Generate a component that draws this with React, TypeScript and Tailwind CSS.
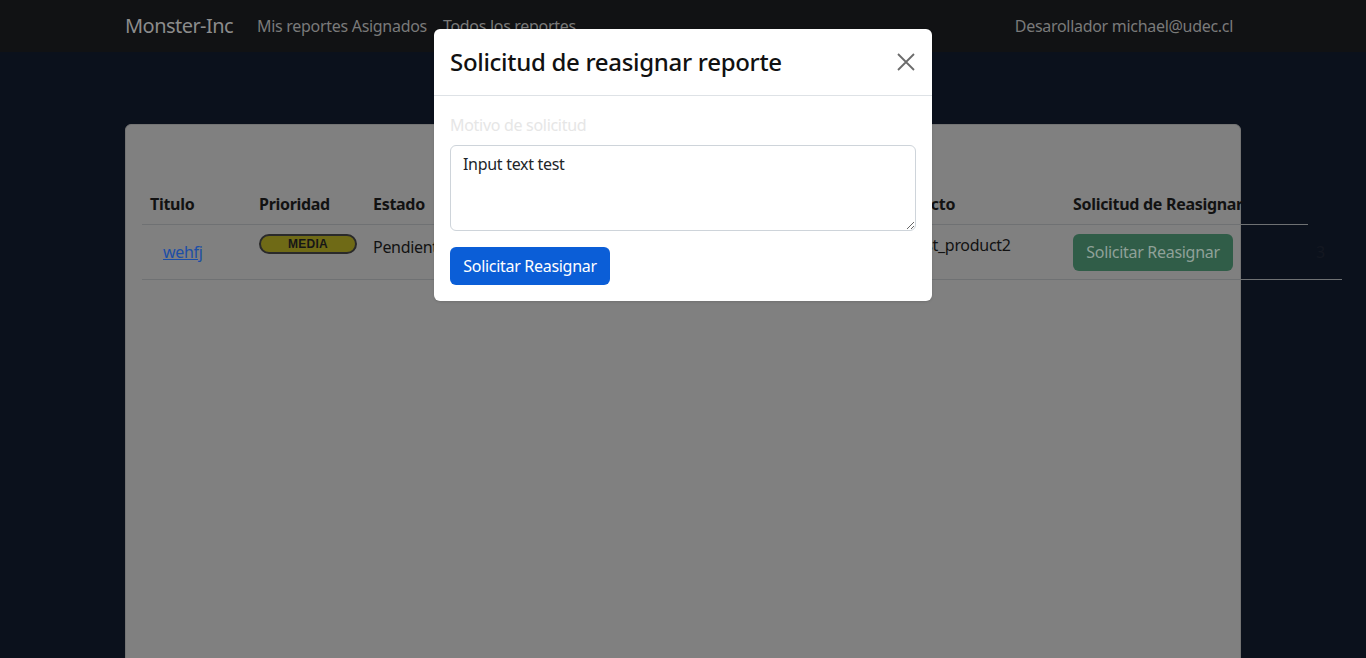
import React from "react";

const font = { fontFamily: '"Noto Sans", "Open Sans", sans-serif' };

export default function App() {
  return (
    <div className="relative h-[658px] w-[1366px] overflow-hidden bg-[#0b111c] tracking-[-0.3px]" style={font}>
      {/* navbar */}
      <nav className="h-[52px] bg-[#111214]">
        <div className="mx-auto flex h-full w-[1116px] items-center">
          <span className="text-[20px] tracking-[-0.55px] text-[#8c8c8c]">Monster-Inc</span>
          <span className="ml-[24px] text-[16px] text-[#7a7a7a]">Mis reportes Asignados</span>
          <span className="ml-[16px] text-[16px] text-[#7a7a7a]">Todos los reportes</span>
          <span className="ml-auto mr-[8px] text-[16px] text-[#7a7a7a]">Desarollador michael@udec.cl</span>
        </div>
      </nav>

      {/* card */}
      <div className="mx-auto mt-[72px] h-[600px] w-[1116px] rounded-[6px] border border-[#737373] bg-[#808080] pt-[58px] pl-[16px]">
        <div className="w-[1200px]">
          <div className="flex h-[42px] w-[1166px] items-center border-b border-[#6f7173] text-[16px] font-bold text-[#121212]">
            <div className="w-[109px] px-[8px]">Titulo</div>
            <div className="w-[114px] px-[8px]">Prioridad</div>
            <div className="w-[120px] px-[8px]">Estado</div>
            <div className="w-[200px] px-[8px]">Fecha</div>
            <div className="w-[192px] px-[8px]">Descripcion</div>
            <div className="w-[188px] px-[8px]">Producto</div>
            <div className="w-[243px] whitespace-nowrap px-[8px]">Solicitud de Reasignar</div>
          </div>
          <div className="flex h-[55px] w-[1200px] items-center border-b border-[#6f7173] text-[16px] text-[#121212]">
            <div className="w-[109px] px-[8px]">
              <span className="ml-[13px] text-[#1c4ea6] underline">wehfj</span>
            </div>
            <div className="w-[114px] self-start px-[8px] pt-[9px]">
              <div className="flex h-[20px] w-[98px] items-center justify-center rounded-full border-2 border-[#2a2a2a] bg-[#6f6a16] text-[12px] font-bold tracking-wide text-[#161616]" style={{ fontFamily: '"Liberation Sans", sans-serif' }}>
                MEDIA
              </div>
            </div>
            <div className="-mt-[10px] w-[120px] px-[8px]">Pendiente</div>
            <div className="w-[200px] px-[8px]">2023-05-10</div>
            <div className="w-[192px] px-[8px]">desc</div>
            <div className="-mt-[14px] w-[188px] px-[8px]">
              <span className="ml-[26px]">test_product2</span>
            </div>
            <div className="w-[243px] px-[8px]">
              <div className="flex h-[37px] w-[160px] items-center justify-center rounded-[6px] bg-[#305d48] text-[16px] text-[#8fa198]">
                Solicitar Reasignar
              </div>
            </div>
            <div className="px-[8px] text-[#141821]">3</div>
          </div>
        </div>
      </div>

      {/* modal */}
      <div className="absolute left-[434px] top-[29px] w-[498px] rounded-[6px] bg-white shadow">
        <div className="flex h-[67px] items-center justify-between border-b border-[#dee2e6] px-[16px]">
          <h5 className="text-[24px] font-medium text-[#111]">Solicitud de reasignar reporte</h5>
          <svg width="20" height="20" viewBox="0 0 20 20">
            <path d="M2 2 L18 18 M18 2 L2 18" stroke="#6b6b6b" strokeWidth="1.8" />
          </svg>
        </div>
        <div className="px-[16px] pt-[17px] pb-[16px]">
          <div className="text-[16px] text-[#e6e6e6]">Motivo de solicitud</div>
          <textarea
            readOnly
            value="Input text test"
            className="mt-[8px] block h-[86px] w-[466px] rounded-[6px] border border-[#ced4da] px-[12px] py-[6px] text-[16px] tracking-[-0.3px] text-[#212529] outline-none"
            style={font}
          />
          <button className="mt-[16px] flex h-[38px] w-[160px] items-center justify-center rounded-[6px] bg-[#0b5ed7] text-[16px] text-white">
            Solicitar Reasignar
          </button>
        </div>
      </div>
    </div>
  );
}
